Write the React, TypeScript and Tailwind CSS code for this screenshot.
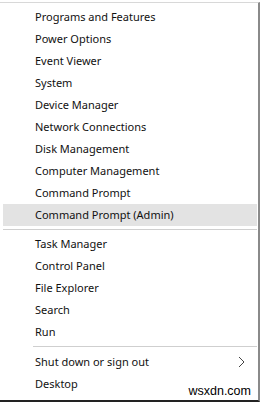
const groups: string[][] = [
  [
    'Programs and Features',
    'Power Options',
    'Event Viewer',
    'System',
    'Device Manager',
    'Network Connections',
    'Disk Management',
    'Computer Management',
    'Command Prompt',
    'Command Prompt (Admin)',
  ],
  ['Task Manager', 'Control Panel', 'File Explorer', 'Search', 'Run'],
];

const Row = ({ label, active = false, arrow = false }: { label: string; active?: boolean; arrow?: boolean }) => (
  <div
    className={`flex items-center justify-between h-[22px] pl-[32px] pr-[12px] text-[11px] text-[#111] ${
      active ? 'bg-[#e3e3e3]' : ''
    }`}
  >
    <span>{label}</span>
    {arrow && (
      <svg width="7" height="12" viewBox="0 0 7 12" fill="none" stroke="#444" strokeWidth="1">
        <path d="M1 1l5 5-5 5" />
      </svg>
    )}
  </div>
);

export default function App() {
  return (
    <div
      className="w-[264px] h-[402px] bg-white overflow-hidden flex"
      style={{ fontFamily: '"Noto Sans", "Open Sans", sans-serif' }}
    >
      <div className="relative w-[260px] h-[400px] border-t border-t-[#d8d8d8] border-r-2 border-r-[#8a8a8a] border-b-2 border-b-[#222] mt-[2px] pl-[3px] pr-[1px] pt-[3px] flex flex-col">
        {groups[0].map((g) => (
          <Row key={g} label={g} active={g === 'Command Prompt (Admin)'} />
        ))}
        <div className="h-px bg-[#cfcfcf] my-[3px]" />
        {groups[1].map((g) => (
          <Row key={g} label={g} />
        ))}
        <div className="h-px bg-[#cfcfcf] ml-[30px] mt-[3px] mb-[4px]" />
        <Row label="Shut down or sign out" arrow />
        <Row label="Desktop" />
        {/* watermark */}
        <span
          className="absolute right-[5px] bottom-[1px] bg-white px-[2px] text-[12.5px] leading-[16px] text-black"
          style={{ fontFamily: '"Liberation Sans", Arial, sans-serif' }}
        >
          wsxdn.com
        </span>
      </div>
      <div className="flex-1 bg-white" />
    </div>
  );
}
